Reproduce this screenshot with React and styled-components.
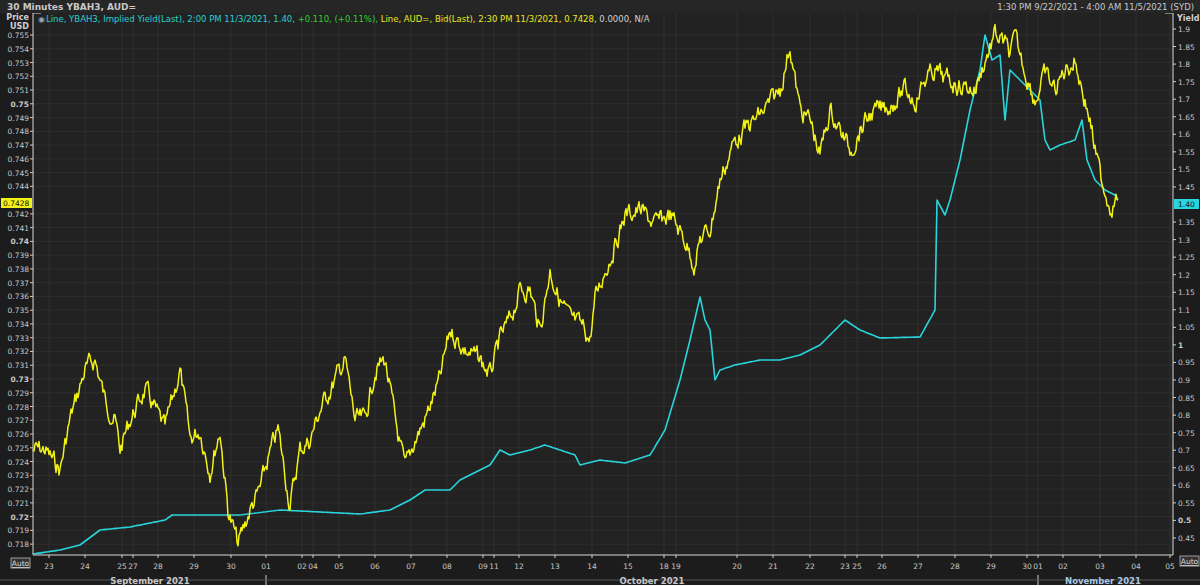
import React from "react";
import styled, { createGlobalStyle } from "styled-components";

const Global = createGlobalStyle`
  body { margin: 0; background: #1a1a1a; font-family: Tahoma, "DejaVu Sans", "Liberation Sans", sans-serif; }
`;

const W = 1200;
const H = 585;
const PL = 33;
const PR = 1173;
const PT = 13;
const PB = 555;

const Frame = styled.div`
  width: ${W}px;
  height: ${H}px;
  background: #1c1c1c;
  display: flex;
  flex-direction: column;
  overflow: hidden;
  color: #cfcfcf;
`;

const Header = styled.div`
  height: 13px;
  display: flex;
  justify-content: space-between;
  align-items: center;
  padding: 0 6px 0 7px;
  font-size: 9px;
  font-weight: bold;
  color: #c8c8c8;
  background: #262626;
`;

const Range = styled.span`
  font-weight: normal;
  font-size: 8.5px;
`;

const Chart = styled.svg`
  display: block;
  flex: 1;
`;

const DAYS = [
  [49, "23"], [85, "24"], [122, "25"], [133, "27"], [158, "28"], [194, "29"], [231, "30"],
  [266, "01"], [302, "02"], [313, "04"], [339, "05"], [375, "06"], [411, "07"], [447, "08"],
  [483, "09"], [494, "11"], [519, "12"], [555, "13"], [592, "14"], [628, "15"], [664, "18"],
  [676, "19"], [737, "20"], [773, "21"], [810, "22"], [845, "23"], [857, "25"], [882, "26"],
  [918, "27"], [955, "28"], [991, "29"], [1027, "30"], [1038, "01"], [1063, "02"], [1100, "03"],
  [1136, "04"], [1170, "05"],
];

const YEL = [[33,450],[45,450],[60,470],[70,420],[85,370],[95,360],[105,400],[115,420],[120,450],[130,420],[140,400],[145,390],[155,410],[165,430],[175,390],[180,370],[190,440],[200,430],[210,470],[220,430],[228,510],[238,545],[250,510],[260,490],[268,460],[278,430],[290,505],[300,450],[310,440],[320,410],[335,380],[345,360],[355,420],[365,420],[375,370],[385,360],[395,420],[405,470],[415,440],[425,420],[440,380],[450,330],[465,350],[480,360],[490,375],[500,340],[510,320],[520,290],[530,290],[540,330],[550,270],[560,300],[570,320],[585,330],[590,340],[595,300],[605,270],[615,245],[625,215],[640,210],[655,225],[670,215],[685,240],[695,265],[700,240],[710,230],[720,180],[735,140],[750,125],[765,110],[780,90],[790,45],[795,80],[800,110],[810,120],[820,155],[830,110],[840,130],[850,150],[860,130],[870,115],[880,110],[890,105],[905,90],[915,100],[925,80],[935,70],[945,80],[960,85],[975,90],[985,60],[995,35],[1005,45],[1010,55],[1015,40],[1025,70],[1035,100],[1045,75],[1055,90],[1065,70],[1075,60],[1085,100],[1090,120],[1095,150],[1100,175],[1105,190],[1110,205],[1118,200]];

const CYAN = [[33,554],[60,550],[80,545],[100,530],[130,527],[165,520],[172,515],[175,515],[200,515],[240,515],[280,510],[320,512],[360,514],[390,510],[410,500],[425,490],[450,490],[460,480],[490,465],[500,450],[510,455],[530,450],[545,445],[575,455],[580,465],[600,460],[625,463],[650,455],[665,430],[680,380],[690,340],[700,297],[705,320],[710,330],[715,380],[720,370],[735,365],[760,360],[780,360],[800,355],[820,345],[845,320],[860,330],[880,338],[920,337],[935,310],[937,200],[945,215],[950,200],[960,160],[970,110],[980,70],[985,35],[992,60],[1000,55],[1005,120],[1010,70],[1020,80],[1040,100],[1045,140],[1050,150],[1060,145],[1075,140],[1082,120],[1087,160],[1095,180],[1105,190],[1115,195],[1118,200]];

function interp(pts, noise, seed, step) {
  let s = seed;
  const rnd = () => { s = (s * 9301 + 49297) % 233280; return s / 233280; };
  const out = [];
  let drift = 0;
  for (let i = 0; i < pts.length - 1; i++) {
    const [x0, y0] = pts[i];
    const [x1, y1] = pts[i + 1];
    const n = Math.max(1, Math.round((x1 - x0) / step));
    for (let k = 0; k < n; k++) {
      const t = k / n;
      if (noise) drift = drift * 0.6 + (rnd() - 0.5) * noise;
      const y = y0 + (y1 - y0) * t + drift;
      out.push(`${(x0 + (x1 - x0) * t).toFixed(1)},${y.toFixed(1)}`);
    }
  }
  const l = pts[pts.length - 1];
  out.push(`${l[0]},${l[1]}`);
  return out.join(" ");
}

const fmt = (v, d) => String(parseFloat(v.toFixed(d)));

const leftTicks = Array.from({ length: 38 }, (_, i) => {
  const v = 0.755 - i * 0.001;
  return { y: 35 + i * 13.76, label: fmt(v, 3), bold: i % 10 === 5 };
}).filter((t) => Math.abs(t.y - 203) > 8);
const rightTicks = Array.from({ length: 30 }, (_, i) => {
  const v = 1.9 - i * 0.05;
  const label = fmt(v, 2);
  return { y: 29 + i * 17.55, label, bold: label === "1" || label === "0.5" };
}).filter((t) => Math.abs(t.y - 204) > 8);

export default function App() {
  const yel = interp(YEL, 16, 7, 1);
  const cy = interp(CYAN, 0, 1, 2);
  return (
    <Frame>
      <Global />
      <Header>
        <span>30 Minutes YBAH3, AUD=</span>
        <Range>1:30 PM 9/22/2021 - 4:00 AM 11/5/2021 (SYD)</Range>
      </Header>
      <Chart width={W} height={H - 13} viewBox={`0 13 ${W} ${H - 13}`}>
        <rect x={PL} y={PT} width={PR - PL} height={PB - PT} fill="#222222" />
        {leftTicks.map((t) => (
          <line key={t.y} x1={PL} x2={PR} y1={t.y} y2={t.y} stroke="#2e2e2e" strokeWidth="1" />
        ))}
        {DAYS.map(([x, d]) => (
          <line key={x + d} x1={x} x2={x} y1={PT} y2={PB} stroke="#2e2e2e" strokeWidth="1" />
        ))}
        <line x1={PL} x2={PL} y1={PT} y2={PB} stroke="#d8d8d8" />
        <line x1={PR} x2={PR} y1={PT} y2={PB} stroke="#d8d8d8" />
        <line x1={PL} x2={PR} y1={PB} y2={PB} stroke="#d8d8d8" />
        <line x1={PL} x2={PL + 8} y1={PT} y2={PT} stroke="#d8d8d8" />
        <line x1={PR - 8} x2={PR} y1={PT} y2={PT} stroke="#d8d8d8" />

        <text x={38} y={22} fontSize="8" fill="#9ab">◉</text>
        <text x={46} y={22} fontSize="8.5" fontFamily="Tahoma, DejaVu Sans, sans-serif">
          <tspan fill="#28d0d0">Line, YBAH3, Implied Yield(Last), 2:00 PM 11/3/2021, 1.40, </tspan>
          <tspan fill="#2fd12f">+0.110, (+0.11%), </tspan>
          <tspan fill="#e8e820">Line, AUD=, Bid(Last), 2:30 PM 11/3/2021, 0.7428, </tspan>
          <tspan fill="#d0d0d0">0.0000, N/A</tspan>
        </text>

        <text x={29} y={20} fontSize="8" fontWeight="bold" fill="#d0d0d0" textAnchor="end">Price</text>
        <text x={29} y={29} fontSize="8" fontWeight="bold" fill="#d0d0d0" textAnchor="end">USD</text>
        {leftTicks.map((t) => (
          <g key={t.label}>
            <line x1={PL - 3} x2={PL} y1={t.y} y2={t.y} stroke="#d0d0d0" />
            <text x={29} y={t.y + 3} fontSize="7.5" fontWeight={t.bold ? "bold" : "normal"} fill="#c8c8c8" textAnchor="end">{t.label}</text>
          </g>
        ))}
        <text x={1177} y={21} fontSize="8" fontWeight="bold" fill="#d0d0d0">Yield</text>
        {rightTicks.map((t) => (
          <g key={t.label}>
            <line x1={PR} x2={PR + 3} y1={t.y} y2={t.y} stroke="#d0d0d0" />
            <text x={1178} y={t.y + 3} fontSize="7.5" fontWeight={t.bold ? "bold" : "normal"} fill="#c8c8c8">{t.label}</text>
          </g>
        ))}

        <polyline points={cy} fill="none" stroke="#2ad4dc" strokeWidth="1.6" strokeLinejoin="round" />
        <polyline points={yel} fill="none" stroke="#f2f215" strokeWidth="1.5" strokeLinejoin="round" />

        <rect x={1} y={198} width={31} height={10} fill="#f2f215" />
        <text x={3} y={206} fontSize="7.5" fill="#111">0.7428</text>
        <rect x={1174} y={199} width={25} height={10} fill="#2ad4dc" />
        <text x={1178} y={207} fontSize="7.5" fill="#111">1.40</text>

        {DAYS.map(([x, d]) => (
          <g key={"t" + x + d}>
            <line x1={x} x2={x} y1={PB} y2={PB + 3} stroke="#d0d0d0" />
            <text x={x} y={PB + 14} fontSize="7.5" fill="#c8c8c8" textAnchor="middle">{d}</text>
          </g>
        ))}
        <line x1={266} x2={266} y1={PB + 20} y2={H} stroke="#d0d0d0" />
        <line x1={1038} x2={1038} y1={PB + 20} y2={H} stroke="#d0d0d0" />
        <line x1={0} x2={W} y1={H - 5} y2={H - 5} stroke="#555" />
        <text x={150} y={H - 1} fontSize="8.5" fontWeight="bold" fill="#c8c8c8" textAnchor="middle">September 2021</text>
        <text x={652} y={H - 1} fontSize="8.5" fontWeight="bold" fill="#c8c8c8" textAnchor="middle">October 2021</text>
        <text x={1103} y={H - 1} fontSize="8.5" fontWeight="bold" fill="#aac8e6" textAnchor="middle">November 2021</text>

        <rect x={11} y={558} width={19} height={10} fill="#333" stroke="#bbb" strokeWidth="0.8" />
        <text x={20.5} y={566} fontSize="7.5" fill="#ddd" textAnchor="middle" textDecoration="underline">Auto</text>
        <rect x={1180} y={556} width={19} height={10} fill="#333" stroke="#bbb" strokeWidth="0.8" />
        <text x={1189.5} y={564} fontSize="7.5" fill="#ddd" textAnchor="middle" textDecoration="underline">Auto</text>
      </Chart>
    </Frame>
  );
}
